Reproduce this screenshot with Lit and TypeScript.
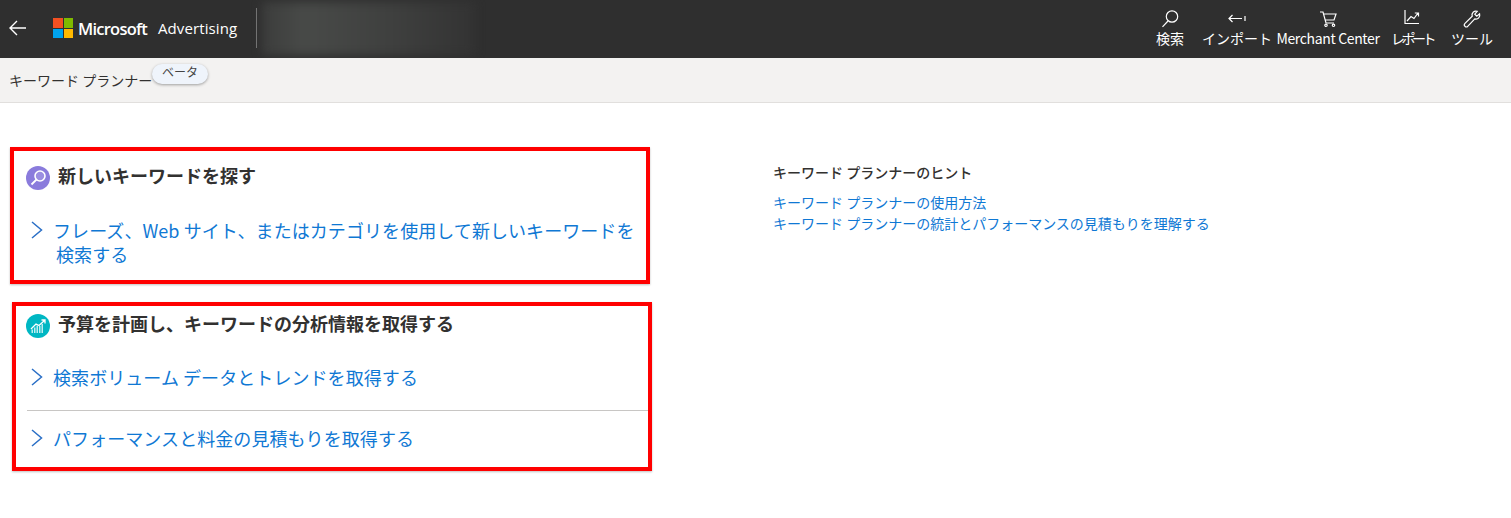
import { LitElement, html, css, svg } from "lit";
import { customElement } from "lit/decorators.js";

@customElement("app-root")
export class AppRoot extends LitElement {
  static styles = css`
    :host { display: block; width: 1511px; height: 518px; overflow: hidden; background: #fff; font-family: "Noto Sans CJK JP", "Noto Sans", sans-serif; color: #323130; }
    .top { box-sizing: border-box; height: 58px; padding-bottom: 2px; background: #2f2f2f; display: flex; align-items: center; color: #fff; overflow: hidden; }
    .back { margin-left: 9px; width: 18px; height: 18px; display: block; }
    .logo { margin-left: 26px; width: 20px; height: 20px; display: grid; grid-template-columns: 9.5px 9.5px; grid-template-rows: 9.5px 9.5px; gap: 1px; }
    .logo i:nth-child(1) { background: #f25022; }
    .logo i:nth-child(2) { background: #7fba00; }
    .logo i:nth-child(3) { background: #00a4ef; }
    .logo i:nth-child(4) { background: #ffb900; }
    .ms { margin-left: 5px; width: 70px; font: 600 16.5px "Open Sans", sans-serif; letter-spacing: -0.75px; white-space: nowrap; }
    .adv { margin-left: 10px; width: 80px; font: 400 15px "Open Sans", sans-serif; letter-spacing: 0.1px; white-space: nowrap; }
    .sep { margin-left: 18px; width: 1px; height: 40px; background: #7a7a7a; }
    .acct { margin-left: 5px; width: 213px; height: 53px; background: linear-gradient(90deg, #3c3d3c, #484a48 20%, #3f403f 60%, #333 100%); filter: blur(5px); }
    .nav { margin-left: auto; display: flex; margin-right: 8px; }
    .nav a { display: flex; flex-direction: column; align-items: center; font-size: 14px; line-height: 18px; color: #fff; white-space: nowrap; }
    .nav a:nth-child(1) { width: 62px; }
    .nav a:nth-child(2) { width: 72px; }
    .nav a:nth-child(3) { width: 110px; letter-spacing: -0.35px; }
    .nav a:nth-child(4) { width: 58px; letter-spacing: -3.5px; }
    .nav a:nth-child(5) { width: 62px; }
    .nav svg { width: 20px; height: 20px; display: block; }
    .sub { height: 44px; background: #f3f2f1; border-bottom: 1px solid #e1dfdd; display: flex; align-items: center; padding-left: 9px; font-size: 14px; position: relative; }
    .badge { position: absolute; left: 152px; top: 6px; height: 20px; width: 56px; border-radius: 10px; background: #eff4fb; box-shadow: 0 1px 3px rgba(0,0,0,.35); font-size: 12px; line-height: 16px; text-align: center; color: #444; }
    .main { display: grid; grid-template-columns: 763px 1fr; }
    .left { padding: 44px 0 0 10px; }
    .box { box-sizing: border-box; width: 640px; border: 4px solid #f00; box-shadow: 0 1px 2px rgba(0,0,0,.25); }
    .box.one { height: 137px; padding: 12px 0 0 12px; }
    .box.two { height: 169px; margin: 18px 0 0 2px; padding: 5px 0 0 10px; }
    .head { display: flex; align-items: flex-start; gap: 8px; height: 28px; font-size: 18px; font-weight: 700; line-height: 24px; color: #323130; }
    .head svg { width: 24px; height: 24px; display: block; margin-top: 3px; }
    .link { display: flex; font-size: 18px; line-height: 24px; color: #0f78d4; letter-spacing: 0.07px; }
    .link svg { width: 14px; height: 18px; flex: none; margin: 3px 9px 0 4px; }
    .one .link { margin-top: 27px; width: 612px; }
    .two .head { margin-bottom: 10px; }
    .two .link { height: 56px; align-items: center; }
    .two .link svg { margin-top: 0; }
    .two .rule + .link { height: 54px; }
    .rule { height: 1px; background: #c8c6c4; margin: 5px 0 0 1px; }
    .indent { display: block; padding-left: 3px; }
    .tips { padding: 60px 0 0 10px; }
    .tips h3 { margin: 0 0 11px; font-size: 14px; line-height: 18px; font-weight: 500; color: #323130; }
    .tips a { display: block; font-size: 14px; line-height: 21px; color: #0f78d4; }
  `;

  private navIcon(kind: string) {
    const p: Record<string, unknown> = {
      search: svg`<circle cx="12" cy="7.5" r="5.7"/><path d="M8 12 L2.5 17.8"/>`,
      import: svg`<path d="M2 9.5 H15 M5.5 6 L2 9.5 L5.5 13 M18 7 V12"/>`,
      cart: svg`<path d="M2 3 H5 L8 14 H16 M5.5 5 H18 L16 11 H7.2"/><circle cx="8" cy="16.3" r="1.2"/><circle cx="15.5" cy="16.3" r="1.2"/>`,
      report: svg`<path d="M3 1 V14.5 H17 M5 12 L9 7.5 L12 9.5 L16 4 M12.8 4 H16.5 V7.5"/>`,
      tool: svg`<path d="M3 17.3 C2 16.3 2 15.3 3 14.3 L10.2 7.2 C9.3 4 12 1.5 15.2 2.4 L12.8 5.2 L14.8 7.2 L17.6 4.8 C18.5 8 16 10.8 12.8 9.9 L5.7 17.3 C5 18.2 3.8 18.2 3 17.3 Z"/>`,
    };
    return html`<svg viewBox="0 0 20 20" fill="none" stroke="#fff" stroke-width="1.2">${p[kind]}</svg>`;
  }

  private chevron() {
    return html`<svg viewBox="0 0 14 18" fill="none" stroke="#2a6fc6" stroke-width="1.5"><path d="M2 1 L11.5 9 L2 17"/></svg>`;
  }

  render() {
    return html`
      <div class="top">
        <svg class="back" viewBox="0 0 18 18" fill="none" stroke="#fff" stroke-width="1.4"><path d="M1 9 H17 M8 2 L1 9 L8 16"/></svg>
        <div class="logo"><i></i><i></i><i></i><i></i></div>
        <span class="ms">Microsoft</span>
        <span class="adv">Advertising</span>
        <div class="sep"></div>
        <div class="acct"></div>
        <nav class="nav">
          <a>${this.navIcon("search")}検索</a>
          <a>${this.navIcon("import")}インポート</a>
          <a>${this.navIcon("cart")}Merchant Center</a>
          <a>${this.navIcon("report")}レポート</a>
          <a>${this.navIcon("tool")}ツール</a>
        </nav>
      </div>
      <div class="sub">キーワード プランナー<span class="badge">ベータ</span></div>
      <div class="main">
        <div class="left">
          <section class="box one">
            <div class="head">
              <svg viewBox="0 0 24 24"><circle cx="12" cy="12" r="12" fill="#8a7bdc"/><circle cx="14" cy="10" r="5" fill="#fff" fill-opacity=".15" stroke="#fff" stroke-width="1.6"/><path d="M10.5 13.5 L5.5 18.5" stroke="#fff" stroke-width="1.8"/></svg>
              新しいキーワードを探す
            </div>
            <div class="link">${this.chevron()}<span>フレーズ、Web サイト、またはカテゴリを使用して新しいキーワードを<span class="indent">検索する</span></span></div>
          </section>
          <section class="box two">
            <div class="head">
              <svg viewBox="0 0 24 24"><circle cx="12" cy="12" r="12" fill="#00b7c3"/><path d="M5.5 19 V15.5 H7 V19 Z M8 19 V13.5 H9.5 V19 Z M10.5 19 V11.5 H12 V19 Z M13 19 V12 H14.5 V19 Z M15.5 19 V10 H17 V19 Z" fill="#fff" fill-opacity=".75"/><path d="M5 15 L10 10 L13 11.5 L18.5 6.5 M15.5 6 H19 V9.5" fill="none" stroke="#fff" stroke-width="1.3"/></svg>
              予算を計画し、キーワードの分析情報を取得する
            </div>
            <div class="link">${this.chevron()}<span>検索ボリューム データとトレンドを取得する</span></div>
            <div class="rule"></div>
            <div class="link">${this.chevron()}<span>パフォーマンスと料金の見積もりを取得する</span></div>
          </section>
        </div>
        <aside class="tips">
          <h3>キーワード プランナーのヒント</h3>
          <a>キーワード プランナーの使用方法</a>
          <a>キーワード プランナーの統計とパフォーマンスの見積もりを理解する</a>
        </aside>
      </div>
    `;
  }
}
